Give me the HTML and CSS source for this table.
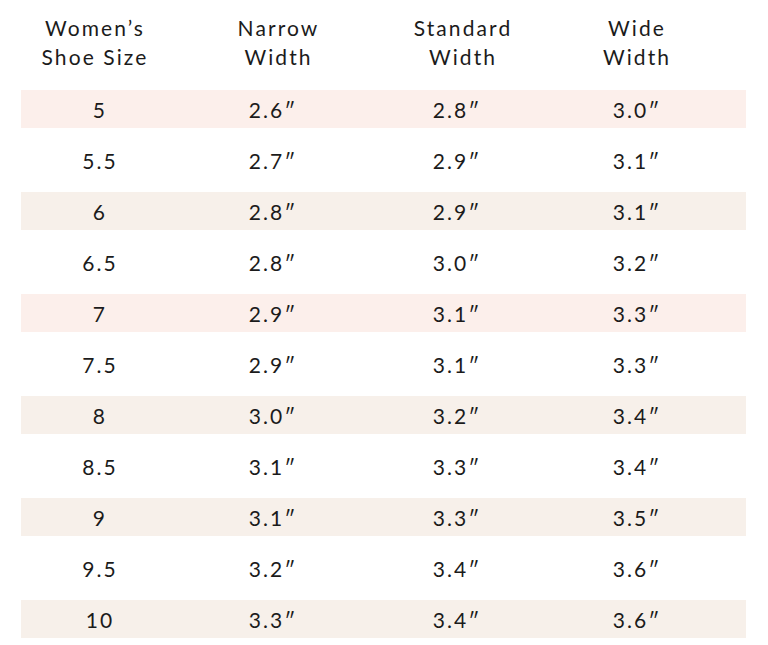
FILE: index.html
```html
<!DOCTYPE html>
<html>
<head>
<meta charset="utf-8">
<link rel="stylesheet" href="styles.css">
</head>
<body>
<div class="chart">
  <div class="head">
    <div>Women’s<br>Shoe Size</div>
    <div>Narrow<br>Width</div>
    <div>Standard<br>Width</div>
    <div>Wide<br>Width</div>
  </div>
  <div class="rows">
    <div class="row pink"><span>5</span><span>2.6″</span><span>2.8″</span><span>3.0″</span></div>
    <div class="row"><span>5.5</span><span>2.7″</span><span>2.9″</span><span>3.1″</span></div>
    <div class="row beige"><span>6</span><span>2.8″</span><span>2.9″</span><span>3.1″</span></div>
    <div class="row"><span>6.5</span><span>2.8″</span><span>3.0″</span><span>3.2″</span></div>
    <div class="row pink"><span>7</span><span>2.9″</span><span>3.1″</span><span>3.3″</span></div>
    <div class="row"><span>7.5</span><span>2.9″</span><span>3.1″</span><span>3.3″</span></div>
    <div class="row beige"><span>8</span><span>3.0″</span><span>3.2″</span><span>3.4″</span></div>
    <div class="row"><span>8.5</span><span>3.1″</span><span>3.3″</span><span>3.4″</span></div>
    <div class="row beige"><span>9</span><span>3.1″</span><span>3.3″</span><span>3.5″</span></div>
    <div class="row"><span>9.5</span><span>3.2″</span><span>3.4″</span><span>3.6″</span></div>
    <div class="row beige"><span>10</span><span>3.3″</span><span>3.4″</span><span>3.6″</span></div>
  </div>
</div>
</body>
</html>
```
FILE: styles.css
```css
html, body {
  margin: 0;
  padding: 0;
  background: #ffffff;
}
body {
  font-family: "Lato", "DejaVu Sans", sans-serif;
  color: #1b1b1b;
  font-size: 21px;
  letter-spacing: 0.1em;
}
.chart {
  width: 725px;
  margin-left: 21px;
  padding-top: 13px;
}
.head {
  display: grid;
  grid-template-columns: 148px 219px 150px 198px;
  line-height: 29px;
  text-align: center;
  height: 58px;
}
.rows {
  margin-top: 19px;
  display: flex;
  flex-direction: column;
  gap: 13px;
}
.row {
  display: grid;
  grid-template-columns: 158px 188px 180px 180px;
  height: 38px;
  align-items: center;
  text-align: center;
}
.row.pink { background: #fcefeb; }
.row.beige { background: #f7f0ea; }
```
